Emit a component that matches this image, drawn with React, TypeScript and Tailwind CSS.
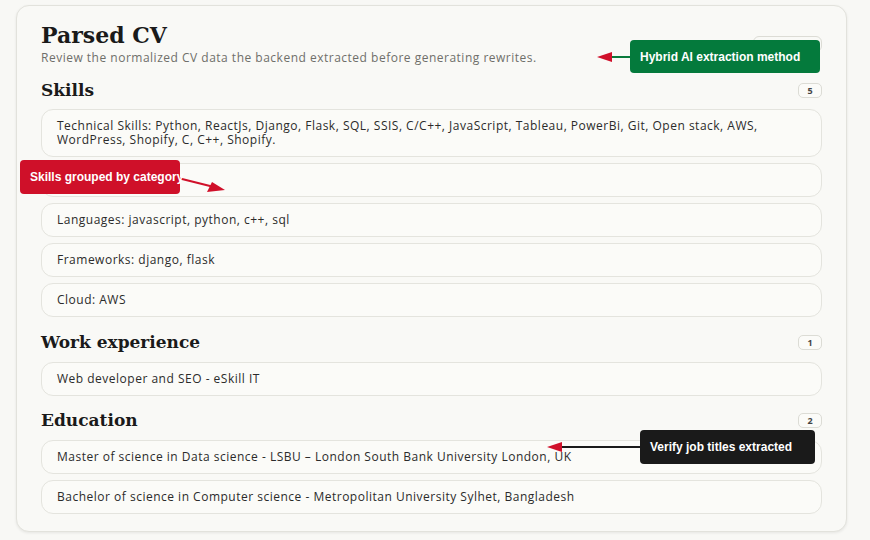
import React from "react";

const serif = { fontFamily: '"DejaVu Serif", Georgia, serif' };

function Badge({ n }: { n: string }) {
  return (
    <span className="flex h-[15px] min-w-[24px] items-center justify-center rounded-[5px] border border-[#dcdcd5] bg-[#fbfbf8] px-[6px] text-[9px] font-bold leading-none text-[#444]">
      {n}
    </span>
  );
}

function Item({ children }: { children: React.ReactNode }) {
  return (
    <div className="rounded-[12px] border border-[#e4e4de] bg-[#fbfbf8] px-[15px] py-[9px] text-[12px] leading-[14px] tracking-[0.5px] text-[#2b2b2b]">
      {children}
    </div>
  );
}

function SectionHead({ title, n }: { title: string; n: string }) {
  return (
    <div className="flex items-center justify-between">
      <h2 className="text-[17px] font-bold leading-[22px] text-[#1a1a1a]" style={serif}>
        {title}
      </h2>
      <Badge n={n} />
    </div>
  );
}

export default function App() {
  return (
    <div
      className="relative h-[540px] w-[870px] overflow-hidden bg-[#f8f8f5]"
      style={{ fontFamily: '"Open Sans", "Noto Sans", sans-serif' }}
    >
      <div className="ml-[16px] mt-[5px] h-[527px] w-[831px] rounded-[13px] border border-[#e2e2dc] bg-[#f9f9f6] px-[24px] pt-[16px] shadow-[0_1px_3px_rgba(0,0,0,0.08)]">
        <div className="flex items-start justify-between">
          <div>
            <h1 className="text-[22px] font-bold leading-[26px] text-[#1a1a1a]" style={serif}>
              Parsed CV
            </h1>
            <p className="mt-[3px] text-[12px] leading-[14px] tracking-[0.5px] text-[#6f6f6a]">
              Review the normalized CV data the backend extracted before generating rewrites.
            </p>
          </div>
          <span className="mt-[14px] flex h-[16px] w-[69px] items-center justify-center rounded-[6px] border border-[#dcdcd5] text-[9px] text-[#444]">
            Hybrid AI
          </span>
        </div>

        <div className="mt-[14px]">
          <SectionHead title="Skills" n="5" />
          <div className="mt-[8px] flex flex-col gap-[6px]">
            <Item>
              Technical Skills: Python, ReactJs, Django, Flask, SQL, SSIS, C/C++, JavaScript, Tableau, PowerBi, Git, Open stack, AWS,
              <br />
              WordPress, Shopify, C, C++, Shopify.
            </Item>
            <Item>Databases: sql</Item>
            <Item>Languages: javascript, python, c++, sql</Item>
            <Item>Frameworks: django, flask</Item>
            <Item>Cloud: AWS</Item>
          </div>
        </div>

        <div className="mt-[14px]">
          <SectionHead title="Work experience" n="1" />
          <div className="mt-[9px] flex flex-col gap-[6px]">
            <Item>Web developer and SEO - eSkill IT</Item>
          </div>
        </div>

        <div className="mt-[13px]">
          <SectionHead title="Education" n="2" />
          <div className="mt-[9px] flex flex-col gap-[6px]">
            <Item>Master of science in Data science - LSBU – London South Bank University London, UK</Item>
            <Item>Bachelor of science in Computer science - Metropolitan University Sylhet, Bangladesh</Item>
          </div>
        </div>
      </div>

      {/* Callouts */}
      <svg className="absolute left-0 top-0" width="870" height="540">
        <line x1="630" y1="57" x2="610" y2="57" stroke="#0a7a3c" strokeWidth="2" />
        <polygon points="597,57 612,52 612,62" fill="#d0102a" />
        <line x1="178" y1="178" x2="214" y2="187" stroke="#d0102a" strokeWidth="2" />
        <polygon points="225,190 207,192 212,182" fill="#d0102a" />
        <line x1="640" y1="447" x2="560" y2="447" stroke="#1a1a1a" strokeWidth="2" />
        <polygon points="547,447 562,442 562,452" fill="#d0102a" />
      </svg>

      <div
        className="absolute left-[630px] top-[40px] flex h-[33px] w-[190px] items-center rounded-[4px] bg-[#047a3c] pl-[10px] text-[12px] font-bold text-white"
        style={{ fontFamily: '"Liberation Sans", Arial, sans-serif' }}
      >
        Hybrid AI extraction method
      </div>
      <div
        className="absolute left-[20px] top-[160px] flex h-[34px] w-[160px] items-center whitespace-nowrap rounded-[4px] bg-[#cf1029] pl-[10px] text-[12px] font-bold text-white"
        style={{ fontFamily: '"Liberation Sans", Arial, sans-serif' }}
      >
        Skills grouped by category
      </div>
      <div
        className="absolute left-[640px] top-[430px] flex h-[34px] w-[175px] items-center rounded-[4px] bg-[#1a1a1a] pl-[10px] text-[12px] font-bold text-white"
        style={{ fontFamily: '"Liberation Sans", Arial, sans-serif' }}
      >
        Verify job titles extracted
      </div>
    </div>
  );
}
